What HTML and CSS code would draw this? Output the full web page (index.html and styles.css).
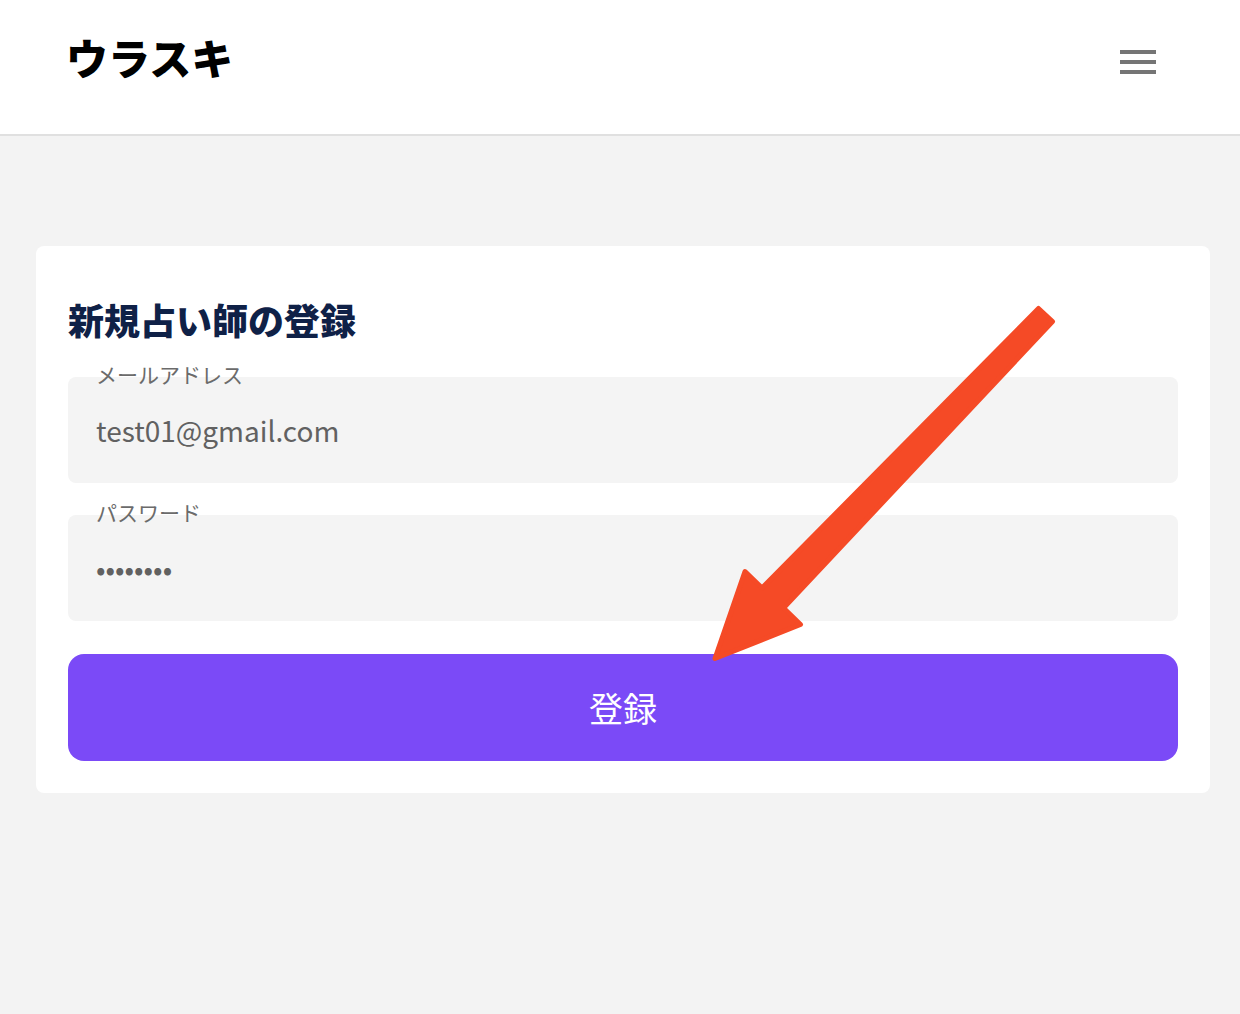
FILE: index.html
```html
<!DOCTYPE html>
<html lang="ja">
<head>
<meta charset="utf-8">
<meta name="viewport" content="width=device-width, initial-scale=1">
<title>新規占い師の登録</title>
<link rel="stylesheet" href="styles.css">
</head>
<body>
<header class="header">
  <a class="logo" href="#">ウラスキ</a>
  <button class="menu" type="button" aria-label="メニュー">
    <svg width="36" height="24" viewBox="0 0 36 24" fill="currentColor" aria-hidden="true"><path d="M0 0h36v4H0zM0 10h36v4H0zM0 20h36v4H0z"/></svg>
  </button>
</header>
<main class="main">
  <form class="card">
    <h1 class="title">新規占い師の登録</h1>
    <div class="field">
      <label class="label" for="email">メールアドレス</label>
      <input class="input" id="email" type="email" value="test01@gmail.com">
    </div>
    <div class="field">
      <label class="label" for="password">パスワード</label>
      <input class="input" id="password" type="password" value="password">
    </div>
    <button class="submit" type="button">登録</button>
    <svg class="arrow" width="344" height="358" viewBox="712 304 344 358" aria-hidden="true">
      <path d="M1038.500 308.500L1052.500 321.500L783.500 608L800.500 624.500L715 658.500L745 571.500L762 588Z" fill="#f54a26" stroke="#f54a26" stroke-width="5" stroke-linejoin="round"/>
    </svg>
  </form>
</main>
</body>
</html>
```
FILE: styles.css
```css
* {
  box-sizing: border-box;
}

body {
  margin: 0;
  background: #f3f3f3;
  font-family: "Noto Sans CJK JP", sans-serif;
}

.header {
  display: flex;
  align-items: flex-start;
  justify-content: space-between;
  height: 136px;
  padding: 27px 84px 0 66px;
  background: #fff;
  border-bottom: 2px solid #e0e0e0;
}

.logo {
  color: #000;
  font-size: 42px;
  font-weight: 900;
  line-height: 60px;
  text-decoration: none;
}

.menu {
  margin-top: 23px;
  padding: 0;
  border: 0;
  background: none;
  color: #757575;
}

.menu svg {
  display: block;
}

.main {
  padding: 110px 30px 110px 36px;
}

.card {
  position: relative;
  display: flex;
  flex-direction: column;
  gap: 32px;
  padding: 47px 32px 32px;
  border-radius: 8px;
  background: #fff;
}

.title {
  margin: 0;
  color: #0f2147;
  font-size: 36px;
  font-weight: 900;
  line-height: 52px;
}

.field {
  position: relative;
}

.label {
  position: absolute;
  top: -19px;
  left: 28px;
  color: #6b6b6b;
  font-size: 21px;
  line-height: 32px;
}

.input {
  display: block;
  width: 100%;
  height: 106px;
  padding: 0 28px;
  border: 0;
  border-radius: 8px;
  background: #f4f4f4;
  color: #616161;
  font: 28px "Noto Sans CJK JP", sans-serif;
}

.submit {
  height: 107px;
  margin-top: 1px;
  padding: 0;
  border: 0;
  border-radius: 16px;
  background: #7b4af7;
  color: #fff;
  font: 34px "Noto Sans CJK JP", sans-serif;
}

.arrow {
  position: absolute;
  top: 58px;
  right: 154px;
  pointer-events: none;
}
```
